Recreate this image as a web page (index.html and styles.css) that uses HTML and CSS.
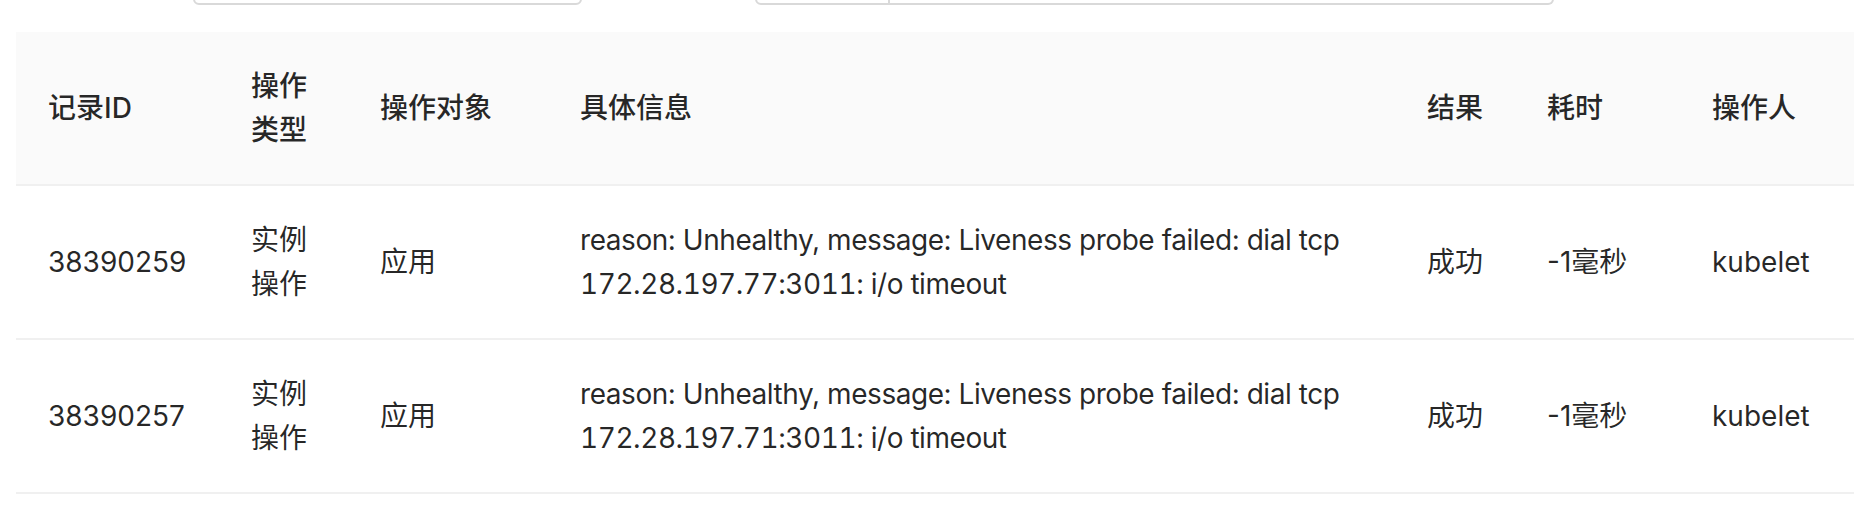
FILE: index.html
```html
<!DOCTYPE html>
<html lang="zh-CN">
<head>
<meta charset="utf-8">
<title>操作记录</title>
<link rel="stylesheet" href="styles.css">
</head>
<body>
<div class="page">
  <div class="filters">
    <div class="input input-left"></div>
    <div class="input-group">
      <div class="addon"></div>
      <div class="input input-right"></div>
    </div>
  </div>
  <div class="table-wrap">
    <table class="table">
      <colgroup>
        <col class="c1"><col class="c2"><col class="c3"><col class="c4"><col class="c5"><col class="c6"><col class="c7">
      </colgroup>
      <thead>
        <tr>
          <th>记录ID</th>
          <th>操作类型</th>
          <th>操作对象</th>
          <th>具体信息</th>
          <th>结果</th>
          <th>耗时</th>
          <th>操作人</th>
        </tr>
      </thead>
      <tbody>
        <tr>
          <td>38390259</td>
          <td>实例操作</td>
          <td>应用</td>
          <td class="info">reason: Unhealthy, message: Liveness probe failed: dial tcp <span class="addr">172.28.197.77:3011:</span> i/o timeout</td>
          <td>成功</td>
          <td>-1毫秒</td>
          <td>kubelet</td>
        </tr>
        <tr>
          <td>38390257</td>
          <td>实例操作</td>
          <td>应用</td>
          <td class="info">reason: Unhealthy, message: Liveness probe failed: dial tcp <span class="addr">172.28.197.71:3011:</span> i/o timeout</td>
          <td>成功</td>
          <td>-1毫秒</td>
          <td>kubelet</td>
        </tr>
      </tbody>
    </table>
  </div>
</div>
</body>
</html>
```

FILE: styles.css
```css
html, body {
  margin: 0;
  padding: 0;
  background: #ffffff;
  overflow: hidden;
}

body {
  font-family: "Inter", "Noto Sans CJK SC", sans-serif;
  font-size: 28px;
  line-height: 44px;
  color: rgba(0, 0, 0, 0.85);
}

.page {
  width: 1854px;
  height: 522px;
  overflow: hidden;
}

.filters {
  display: flex;
  height: 64px;
  margin-top: -59px;
  margin-bottom: 27px;
  padding-left: 193px;
}

.input {
  box-sizing: border-box;
  height: 64px;
  border: 2px solid #d9d9d9;
  border-radius: 6px;
  background: #fff;
}

.input-left {
  width: 389px;
}

.input-group {
  display: flex;
  margin-left: 173px;
}

.addon {
  box-sizing: border-box;
  width: 135px;
  height: 64px;
  border: 2px solid #d9d9d9;
  border-radius: 6px 0 0 6px;
  background: #fff;
}

.input-right {
  width: 664px;
  border-left: none;
  border-radius: 0 6px 6px 0;
}

.table-wrap {
  padding-left: 16px;
}

.table {
  table-layout: fixed;
  width: 2000px;
  border-collapse: collapse;
  border-spacing: 0;
}

.c1 { width: 203px; }
.c2 { width: 129px; }
.c3 { width: 200px; }
.c4 { width: 847px; }
.c5 { width: 120px; }
.c6 { width: 165px; }
.c7 { width: 336px; }

.table th,
.table td {
  padding: 32px;
  text-align: left;
  vertical-align: middle;
  border-bottom: 2px solid #f0f0f0;
  word-break: break-word;
}

.table th {
  background: #fafafa;
  font-weight: 500;
  color: rgba(0, 0, 0, 0.85);
}

.table td {
  font-weight: 400;
}

.table td.info {
  letter-spacing: -0.45px;
}

.addr {
  font-variant-numeric: tabular-nums;
}
```
